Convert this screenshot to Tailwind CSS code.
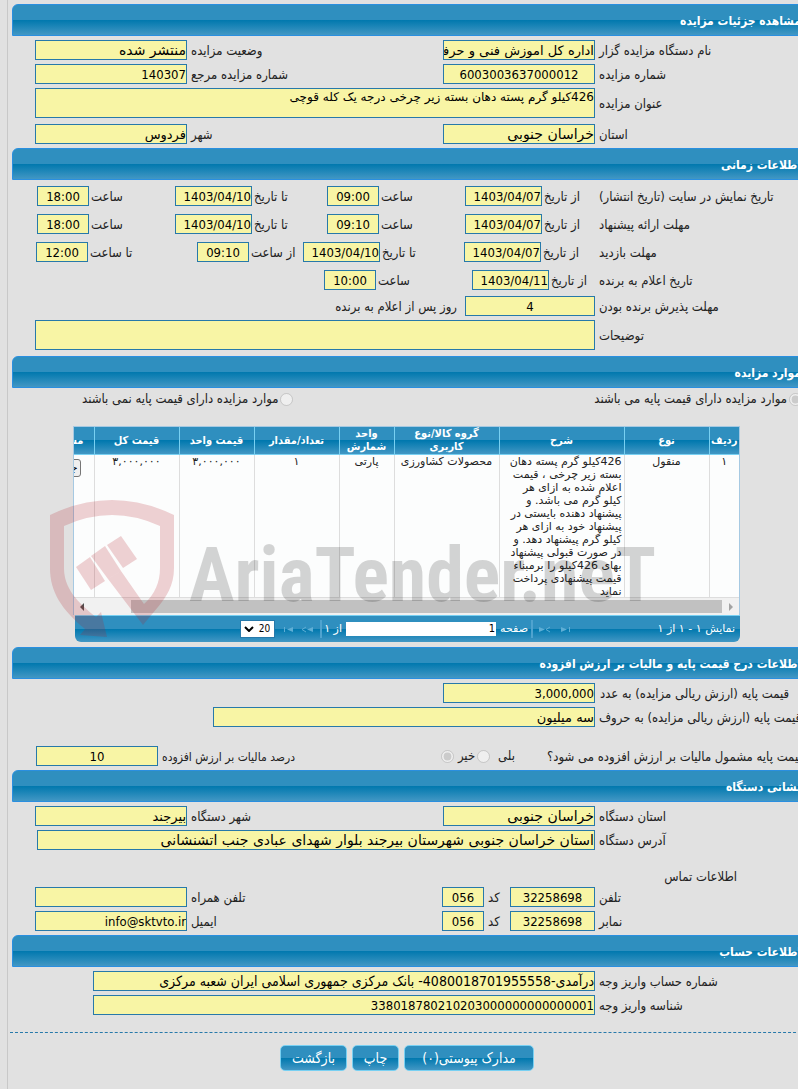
<!DOCTYPE html>
<html lang="fa" dir="rtl">
<head>
    <meta charset="UTF-8">
    <meta name="viewport" content="width=device-width, initial-scale=1.0">
    <title>مشاهده جزئیات مزایده</title>
    <script src="https://cdn.jsdelivr.net/npm/@tailwindcss/browser@4"></script>
</head>
<body class="bg-[#e1e1e1] text-[#222] text-[13px] leading-[18px] font-[Tahoma,'DejaVu_Sans_Condensed','DejaVu_Sans',sans-serif] overflow-x-hidden">
<div class="relative overflow-hidden min-h-screen pl-[7px]">
<main class="-mr-2 min-h-screen border-l border-[#c8c8c8] pl-1 pt-1">

    <!-- جزئیات مزایده -->
    <h2 class="h-8 rounded-tl-md border border-[#2a8fe0] bg-[linear-gradient(#2f8fbf_50%,#0078ae_50%,#4297c4)] pr-1 font-bold text-[12px] leading-[32px] text-white">مشاهده جزئیات مزایده</h2>
    <div class="flex flex-col gap-1 pt-1 pl-[23px]">
        <div class="flex">
            <label for="org" class="w-[211px] pt-0.5 pl-1 text-end whitespace-nowrap">نام دستگاه مزایده گزار</label>
            <input id="org" readonly value="اداره کل اموزش فنی و حرفه ای" class="h-5 w-[152px] border border-[#2779aa] bg-[#f8f5a5] font-['DejaVu_Sans',sans-serif] text-[13px] text-black">
            <label for="status" class="flex-1 pt-0.5 pl-1 text-end whitespace-nowrap">وضعیت مزایده</label>
            <input id="status" readonly value="منتشر شده" class="h-5 w-[152px] border border-[#2779aa] bg-[#f8f5a5] font-['DejaVu_Sans',sans-serif] text-[14px] text-black">
        </div>
        <div class="flex">
            <label for="num" class="w-[211px] pt-0.5 pl-1 text-end whitespace-nowrap">شماره مزایده</label>
            <input id="num" readonly value="6003003637000012" class="h-5 w-[152px] border border-[#2779aa] bg-[#f8f5a5] text-center text-[13px] text-black">
            <label for="ref" class="flex-1 pt-0.5 pl-1 text-end whitespace-nowrap">شماره مزایده مرجع</label>
            <input id="ref" readonly value="140307" class="h-5 w-[152px] border border-[#2779aa] bg-[#f8f5a5] text-[13px] text-black">
        </div>
        <div class="flex items-center">
            <label for="title" class="w-[211px] pt-0.5 pl-1 text-end whitespace-nowrap">عنوان مزایده</label>
            <textarea id="title" readonly class="block h-[30px] flex-1 resize-none overflow-hidden border border-[#2779aa] bg-[#f8f5a5] font-['DejaVu_Sans',sans-serif] text-[12px] leading-[16px] text-black">426کیلو گرم پسته دهان بسته زیر چرخی درجه یک کله قوچی</textarea>
        </div>
        <div class="flex pt-0.5">
            <label for="prov" class="w-[211px] pt-0.5 pl-1 text-end whitespace-nowrap">استان</label>
            <input id="prov" readonly value="خراسان جنوبی" class="h-5 w-[152px] border border-[#2779aa] bg-[#f8f5a5] font-['DejaVu_Sans',sans-serif] text-[14px] text-black">
            <label for="city" class="flex-1 pt-0.5 pl-1 text-end whitespace-nowrap">شهر</label>
            <input id="city" readonly value="فردوس" class="h-5 w-[152px] border border-[#2779aa] bg-[#f8f5a5] font-['DejaVu_Sans',sans-serif] text-[13px] text-black">
        </div>
    </div>

    <!-- اطلاعات زمانی -->
    <h2 class="mt-1 h-8 rounded-tl-md border border-[#2a8fe0] bg-[linear-gradient(#2f8fbf_50%,#0078ae_50%,#4297c4)] pr-1 font-bold text-[12px] leading-[32px] text-white">اطلاعات زمانی</h2>
    <div class="flex flex-col gap-2 pt-1.5 pl-[23px]">
        <div class="flex">
            <span class="w-[211px] pt-0.5 pl-1 text-end whitespace-nowrap">تاریخ نمایش در سایت (تاریخ انتشار)</span>
            <label for="d1" class="w-[53px] pt-0.5 pl-0.5 text-end whitespace-nowrap">از تاریخ</label>
            <input id="d1" readonly value="1403/04/07" class="h-5 w-[77px] border border-[#2779aa] bg-[#f8f5a5] text-[13px] text-black">
            <label for="t1" class="w-[86px] pt-0.5 pl-0.5 text-end whitespace-nowrap">ساعت</label>
            <input id="t1" readonly value="09:00" class="h-5 w-[52px] border border-[#2779aa] bg-[#f8f5a5] text-center text-[13px] text-black">
            <label for="d2" class="w-[75px] pt-0.5 pl-0.5 text-end whitespace-nowrap">تا تاریخ</label>
            <input id="d2" readonly value="1403/04/10" class="h-5 w-[77px] border border-[#2779aa] bg-[#f8f5a5] text-[13px] text-black">
            <label for="t2" class="w-[86px] pt-0.5 pl-0.5 text-end whitespace-nowrap">ساعت</label>
            <input id="t2" readonly value="18:00" class="h-5 w-[52px] border border-[#2779aa] bg-[#f8f5a5] text-center text-[13px] text-black">
        </div>
        <div class="flex">
            <span class="w-[211px] pt-0.5 pl-1 text-end whitespace-nowrap">مهلت ارائه پیشنهاد</span>
            <label for="d3" class="w-[53px] pt-0.5 pl-0.5 text-end whitespace-nowrap">از تاریخ</label>
            <input id="d3" readonly value="1403/04/07" class="h-5 w-[77px] border border-[#2779aa] bg-[#f8f5a5] text-[13px] text-black">
            <label for="t3" class="w-[86px] pt-0.5 pl-0.5 text-end whitespace-nowrap">ساعت</label>
            <input id="t3" readonly value="09:10" class="h-5 w-[52px] border border-[#2779aa] bg-[#f8f5a5] text-center text-[13px] text-black">
            <label for="d4" class="w-[75px] pt-0.5 pl-0.5 text-end whitespace-nowrap">تا تاریخ</label>
            <input id="d4" readonly value="1403/04/10" class="h-5 w-[77px] border border-[#2779aa] bg-[#f8f5a5] text-[13px] text-black">
            <label for="t4" class="w-[86px] pt-0.5 pl-0.5 text-end whitespace-nowrap">ساعت</label>
            <input id="t4" readonly value="18:00" class="h-5 w-[52px] border border-[#2779aa] bg-[#f8f5a5] text-center text-[13px] text-black">
        </div>
        <div class="flex">
            <span class="w-[211px] pt-0.5 pl-1 text-end whitespace-nowrap">مهلت بازدید</span>
            <label for="d5" class="w-[54px] pt-0.5 pl-0.5 text-end whitespace-nowrap">از تاریخ</label>
            <input id="d5" readonly value="1403/04/07" class="h-5 w-[77px] border border-[#2779aa] bg-[#f8f5a5] text-[13px] text-black">
            <label for="d6" class="w-[84px] pt-0.5 pl-0.5 text-end whitespace-nowrap">تا تاریخ</label>
            <input id="d6" readonly value="1403/04/10" class="h-5 w-[77px] border border-[#2779aa] bg-[#f8f5a5] text-[13px] text-black">
            <label for="t5" class="w-[54px] pt-0.5 pl-0.5 text-end whitespace-nowrap">از ساعت</label>
            <input id="t5" readonly value="09:10" class="h-5 w-[52px] border border-[#2779aa] bg-[#f8f5a5] text-center text-[13px] text-black">
            <label for="t6" class="w-[109px] pt-0.5 pl-0.5 text-end whitespace-nowrap">تا ساعت</label>
            <input id="t6" readonly value="12:00" class="h-5 w-[52px] border border-[#2779aa] bg-[#f8f5a5] text-center text-[13px] text-black">
        </div>
        <div class="flex">
            <span class="w-[211px] pt-0.5 pl-1 text-end whitespace-nowrap">تاریخ اعلام به برنده</span>
            <label for="d7" class="w-[46px] pt-0.5 pl-0.5 text-end whitespace-nowrap">از تاریخ</label>
            <input id="d7" readonly value="1403/04/11" class="h-5 w-[77px] border border-[#2779aa] bg-[#f8f5a5] text-[13px] text-black">
            <label for="t7" class="w-24 pt-0.5 pl-0.5 text-end whitespace-nowrap">ساعت</label>
            <input id="t7" readonly value="10:00" class="h-5 w-[52px] border border-[#2779aa] bg-[#f8f5a5] text-center text-[13px] text-black">
        </div>
    </div>
    <div class="flex flex-col gap-1 pt-1.5 pl-[23px]">
        <div class="flex">
            <label for="accept" class="w-[211px] pt-0.5 pl-1 text-end whitespace-nowrap">مهلت پذیرش برنده بودن</label>
            <input id="accept" readonly value="4" class="h-5 w-[130px] border border-[#2779aa] bg-[#f8f5a5] text-center text-[13px] text-black">
            <span class="pt-0.5 pr-2">روز پس از اعلام به برنده</span>
        </div>
        <div class="flex items-center">
            <label for="desc" class="w-[211px] pt-0.5 pl-1 text-end whitespace-nowrap">توضیحات</label>
            <textarea id="desc" readonly class="block h-[30px] flex-1 resize-none overflow-hidden border border-[#2779aa] bg-[#f8f5a5] text-[12px]"></textarea>
        </div>
    </div>

    <!-- موارد مزایده -->
    <h2 class="mt-1.5 h-8 rounded-tl-md border border-[#2a8fe0] bg-[linear-gradient(#2f8fbf_50%,#0078ae_50%,#4297c4)] pr-1 font-bold text-[12px] leading-[32px] text-white">موارد مزایده</h2>
    <div class="flex justify-between pt-px pr-1 pl-[70px]">
        <label class="flex h-5 items-center gap-0.5 whitespace-nowrap"><input type="radio" name="base" checked disabled class="size-[13px]">موارد مزایده دارای قیمت پایه می باشند</label>
        <label class="flex h-5 items-center gap-0.5 whitespace-nowrap"><input type="radio" name="base" disabled class="size-[13px]">موارد مزایده دارای قیمت پایه نمی باشند</label>
    </div>

    <section class="mt-[17px] mr-[66px] ml-[61px] font-['DejaVu_Sans',sans-serif] text-[11px]">
        <div class="border border-b-0 border-[#a6c9e2] bg-[#fcfdfd]">
            <div class="h-[170px] overflow-hidden">
            <table class="w-[731px] table-fixed border-collapse text-center leading-[13px]">
                <colgroup>
                    <col class="w-[30px]"><col class="w-[85px]"><col class="w-[125px]"><col class="w-[105px]"><col class="w-[55px]"><col class="w-[85px]"><col class="w-[75px]"><col class="w-[85px]"><col class="w-[86px]">
                </colgroup>
                <thead class="bg-[linear-gradient(#2f8fbf_50%,#0078ae_50%,#4297c4)] font-['DejaVu_Sans_Condensed',sans-serif] text-white">
                    <tr class="h-[27px] border-b border-[#78d0f2]">
                        <th class="border-l border-[#78d0f2]">ردیف</th>
                        <th class="border-l border-[#78d0f2]">نوع</th>
                        <th class="border-l border-[#78d0f2]">شرح</th>
                        <th class="border-l border-[#78d0f2]">گروه کالا/نوع<br>کاربری</th>
                        <th class="border-l border-[#78d0f2]">واحد<br>شمارش</th>
                        <th class="border-l border-[#78d0f2]">تعداد/مقدار</th>
                        <th class="border-l border-[#78d0f2]">قیمت واحد</th>
                        <th class="border-l border-[#78d0f2]">قیمت کل</th>
                        <th class="pr-2.5 text-start">مستندات</th>
                    </tr>
                </thead>
                <tbody>
                    <tr class="h-[143px] align-top">
                        <td class="border-l border-[#ddd]">۱</td>
                        <td class="border-l border-[#ddd]">منقول</td>
                        <td class="border-l border-[#ddd] pr-0.5 text-start whitespace-nowrap">426کیلو گرم پسته دهان<br>بسته زیر چرخی ، قیمت<br>اعلام شده به ازای هر<br>کیلو گرم می باشد. و<br>پیشنهاد دهنده بایستی در<br>پیشنهاد خود به ازای هر<br>کیلو گرم پیشنهاد دهد. و<br>در صورت قبولی پیشنهاد<br>بهای 426کیلو را برمبناء<br>قیمت پیشنهادی پرداخت<br>نماید</td>
                        <td class="border-l border-[#ddd] whitespace-nowrap">محصولات کشاورزی</td>
                        <td class="border-l border-[#ddd]">پارتی</td>
                        <td class="border-l border-[#ddd]">۱</td>
                        <td class="border-l border-[#ddd]">۳,۰۰۰,۰۰۰</td>
                        <td class="border-l border-[#ddd]">۳,۰۰۰,۰۰۰</td>
                        <td class="pt-1 pr-[13px] text-start"><button class="h-[18px] rounded-[3px] border border-[#767676] bg-[#efefef] px-0.5 text-black">جزئیات</button></td>
                    </tr>
                </tbody>
            </table>
            </div>
            <div class="flex h-[18px] items-center border-t border-[#ddd] bg-[#f1f1f1] px-1.5">
                <svg class="h-2 w-1" viewBox="0 0 4 8"><path d="M0 0L4 4L0 8Z" fill="#a3a3a3"/></svg>
                <div class="mr-[7px] ml-[47px] h-[13px] flex-1 bg-[#c1c1c1]"></div>
                <svg class="h-2 w-1" viewBox="0 0 4 8"><path d="M4 0L0 4L4 8Z" fill="#505050"/></svg>
            </div>
        </div>
        <div class="ml-0.5 flex h-[27px] items-center rounded-b-md border-t border-[#78d0f2] bg-[linear-gradient(#2f8fbf_50%,#0078ae_50%,#4297c4)] pr-[5px] text-white">
            <span class="w-[88px] whitespace-nowrap">نمایش ۱ - ۱ از ۱</span>
            <button aria-label="صفحه اول" class="mr-[76px] w-3"><svg class="h-[7px] w-2.5" viewBox="0 0 10 7" fill="#5eaed5"><path d="M0 1L6 3.5L0 6ZM8 1H9V6H8Z"/></svg></button>
            <button aria-label="صفحه قبل" class="mr-2 w-3"><svg class="h-[7px] w-3" viewBox="0 0 12 7" fill="#5eaed5"><path d="M0 1L6 3.5L0 6Z"/><path d="M11 1L7 3.5L11 6" fill="none" stroke="#5eaed5"/></svg></button>
            <span class="mr-1.5 h-[18px] w-0.5 bg-[#4fa3cf]"></span>
            <label for="page" class="mr-[3px] ml-1 w-7 whitespace-nowrap">صفحه</label>
            <input id="page" value="1" class="h-3.5 w-[150px] bg-white px-px font-['DejaVu_Sans_Condensed'] text-black">
            <span class="mr-1 whitespace-nowrap">از ۱</span>
            <span class="mr-0.5 h-[18px] w-0.5 bg-[#4fa3cf]"></span>
            <button aria-label="صفحه بعد" class="mr-[7px] w-3"><svg class="h-[7px] w-3" viewBox="0 0 12 7" fill="#5eaed5"><path d="M12 1L6 3.5L12 6Z"/><path d="M5 1L1 3.5L5 6" fill="none" stroke="#5eaed5"/></svg></button>
            <button aria-label="صفحه آخر" class="mr-2 w-3"><svg class="h-[7px] w-2.5" viewBox="0 0 10 7" fill="#5eaed5"><path d="M10 1L4 3.5L10 6ZM1 1H2V6H1Z"/></svg></button>
            <span class="relative mr-1.5">
                <select aria-label="تعداد سطر" class="block h-[18px] w-[35px] appearance-none border border-[#2779aa] bg-white pr-1 font-['DejaVu_Sans_Condensed'] text-[10px] leading-[16px] text-black"><option>20</option></select>
                <svg class="pointer-events-none absolute top-1.5 left-1 h-1.5 w-2.5" viewBox="0 0 10 6"><path d="M1 1L5 5L9 1" fill="none" stroke="#000" stroke-width="2"/></svg>
            </span>
        </div>
    </section>

    <!-- قیمت پایه و مالیات -->
    <h2 class="mt-[5px] h-8 rounded-tl-md border border-[#2a8fe0] bg-[linear-gradient(#2f8fbf_50%,#0078ae_50%,#4297c4)] pr-1 font-bold text-[12px] leading-[32px] text-white">اطلاعات درج قیمت پایه و مالیات بر ارزش افزوده</h2>
    <div class="flex flex-col gap-1 pt-1 pl-6">
        <div class="flex">
            <label for="price" class="w-[210px] pt-0.5 pl-1 text-end whitespace-nowrap">قیمت پایه (ارزش ریالی مزایده) به عدد</label>
            <input id="price" readonly value="3,000,000" class="mr-px h-5 w-[152px] border border-[#2779aa] bg-[#f8f5a5] text-[13px] text-black">
        </div>
        <div class="flex">
            <label for="words" class="w-[211px] pt-0.5 pl-1 text-end whitespace-nowrap">قیمت پایه (ارزش ریالی مزایده) به حروف</label>
            <input id="words" readonly value="سه میلیون" class="h-5 w-[382px] border border-[#2779aa] bg-[#f8f5a5] font-['DejaVu_Sans',sans-serif] text-[13px] text-black">
        </div>
        <div class="flex pt-[15px]">
            <span class="flex w-[259px] justify-end pt-0.5 whitespace-nowrap">قیمت پایه مشمول مالیات بر ارزش افزوده می شود؟</span>
            <label class="mr-8 flex items-center whitespace-nowrap">بلی<input type="radio" name="vat" disabled class="mr-2 size-[13px]"></label>
            <label class="mr-0.5 flex items-center whitespace-nowrap">خیر<input type="radio" name="vat" checked disabled class="mr-1 size-[13px]"></label>
            <label for="tax" class="flex-1 pt-0.5 pl-1 text-end text-[12px] whitespace-nowrap">درصد مالیات بر ارزش افزوده</label>
            <input id="tax" readonly value="10" class="h-5 w-[122px] border border-[#2779aa] bg-[#f8f5a5] text-center text-[13px] text-black">
        </div>
    </div>

    <!-- نشانی دستگاه -->
    <h2 class="mt-1 h-8 rounded-tl-md border border-[#2a8fe0] bg-[linear-gradient(#2f8fbf_50%,#0078ae_50%,#4297c4)] pr-1 font-bold text-[12px] leading-[32px] text-white">نشانی دستگاه</h2>
    <div class="flex flex-col gap-1 pt-1 pl-[23px]">
        <div class="flex">
            <label for="oprov" class="w-[211px] pt-0.5 pl-1 text-end whitespace-nowrap">استان دستگاه</label>
            <input id="oprov" readonly value="خراسان جنوبی" class="h-5 w-[152px] border border-[#2779aa] bg-[#f8f5a5] font-['DejaVu_Sans',sans-serif] text-[14px] text-black">
            <label for="ocity" class="flex-1 pt-0.5 pl-1 text-end whitespace-nowrap">شهر دستگاه</label>
            <input id="ocity" readonly value="بیرجند" class="h-5 w-[152px] border border-[#2779aa] bg-[#f8f5a5] font-['DejaVu_Sans',sans-serif] text-[13px] text-black">
        </div>
        <div class="flex pl-0.5">
            <label for="addr" class="w-[211px] pt-0.5 pl-1 text-end whitespace-nowrap">آدرس دستگاه</label>
            <input id="addr" readonly value="استان خراسان جنوبی شهرستان بیرجند بلوار شهدای عبادی جنب اتشنشانی" class="h-5 flex-1 border border-[#2779aa] bg-[#f8f5a5] font-['DejaVu_Sans',sans-serif] text-[14px] text-black">
        </div>
        <h3 class="pt-[13px] pr-[69px] leading-[20px]">اطلاعات تماس</h3>
        <div class="-mt-1 flex">
            <label for="tel" class="w-[211px] pt-0.5 pl-1 text-end whitespace-nowrap">تلفن</label>
            <input id="tel" readonly value="32258698" class="h-5 w-[85px] border border-[#2779aa] bg-[#f8f5a5] text-center text-[13px] text-black">
            <label for="telcode" class="w-[26px] pt-0.5 pl-1 text-end">کد</label>
            <input id="telcode" readonly value="056" class="h-5 w-[42px] border border-[#2779aa] bg-[#f8f5a5] text-center text-[13px] text-black">
            <label for="mobile" class="flex-1 pt-0.5 pl-1 text-end whitespace-nowrap">تلفن همراه</label>
            <input id="mobile" readonly class="h-5 w-[152px] border border-[#2779aa] bg-[#f8f5a5] text-[13px] text-black">
        </div>
        <div class="flex">
            <label for="fax" class="w-[211px] pt-0.5 pl-1 text-end whitespace-nowrap">نمابر</label>
            <input id="fax" readonly value="32258698" class="h-5 w-[85px] border border-[#2779aa] bg-[#f8f5a5] text-center text-[13px] text-black">
            <label for="faxcode" class="w-[26px] pt-0.5 pl-1 text-end">کد</label>
            <input id="faxcode" readonly value="056" class="h-5 w-[42px] border border-[#2779aa] bg-[#f8f5a5] text-center text-[13px] text-black">
            <label for="email" class="flex-1 pt-0.5 pl-1 text-end whitespace-nowrap">ایمیل</label>
            <input id="email" readonly value="info@sktvto.ir" class="h-5 w-[152px] border border-[#2779aa] bg-[#f8f5a5] text-[13px] text-black">
        </div>
    </div>

    <!-- اطلاعات حساب -->
    <h2 class="mt-1 h-8 rounded-tl-md border border-[#2a8fe0] bg-[linear-gradient(#2f8fbf_50%,#0078ae_50%,#4297c4)] pr-1 font-bold text-[12px] leading-[32px] text-white">اطلاعات حساب</h2>
    <div class="flex flex-col gap-1 pt-1 pl-[81px]">
        <div class="flex">
            <label for="acc" class="w-[211px] pt-0.5 pl-1 text-end whitespace-nowrap">شماره حساب واریز وجه</label>
            <input id="acc" readonly value="درآمدی-4080018701955558- بانک مرکزی جمهوری اسلامی ایران شعبه مرکزی" class="h-5 flex-1 border border-[#2779aa] bg-[#f8f5a5] text-[14px] text-black">
        </div>
        <div class="flex">
            <label for="accid" class="w-[211px] pt-0.5 pl-1 text-end whitespace-nowrap">شناسه واریز وجه</label>
            <input id="accid" readonly value="338018780210203000000000000001" class="h-5 flex-1 border border-[#2779aa] bg-[#f8f5a5] text-[13px] text-black">
        </div>
    </div>

    <div class="mt-[17px] -ml-0.5 border-t border-dashed border-[#2779aa]"></div>
    <div class="mt-3 flex justify-center gap-[5px] pr-3 pl-2 text-[14px] text-white">
        <button class="h-[26px] w-[130px] rounded-[5px] border border-[#78d0f2] bg-[linear-gradient(#2f8fbf_50%,#0078ae_50%,#4297c4)]">مدارک پیوستی(۰)</button>
        <button class="h-[26px] w-[47px] rounded-[5px] border border-[#78d0f2] bg-[linear-gradient(#2f8fbf_50%,#0078ae_50%,#4297c4)]">چاپ</button>
        <button class="h-[26px] w-[67px] rounded-[5px] border border-[#78d0f2] bg-[linear-gradient(#2f8fbf_50%,#0078ae_50%,#4297c4)]">بازگشت</button>
    </div>
</main>

<!-- لوگوی روی جدول -->
<svg class="pointer-events-none absolute top-[490px] left-10 h-[160px] w-[620px]" viewBox="40 490 620 160" direction="ltr">
    <g fill="#b41e28" fill-opacity="0.2">
        <path d="M50 515Q112 485 174 515V568C174 586 166 597 158 607L143 625L108 579L121 571L144 604C155 594 160 582 160 568V526Q112 504 64 526V568C64 588 77 602 96 617L101 612L107 637L80 635L85 629C62 610 50 592 50 568Z"/>
        <path d="M76 567L90 557L105 581L91 590Z"/>
        <path d="M91 556L105 546L121 571L108 579Z"/>
        <path d="M107 545L121 536L137 559L123 568Z"/>
    </g>
    <text x="189" y="601" font-family="'Roboto Condensed',Roboto" font-weight="bold" font-size="76" fill="#000" opacity="0.16">AriaTender.neT</text>
</svg>
</div>
</body>
</html>
